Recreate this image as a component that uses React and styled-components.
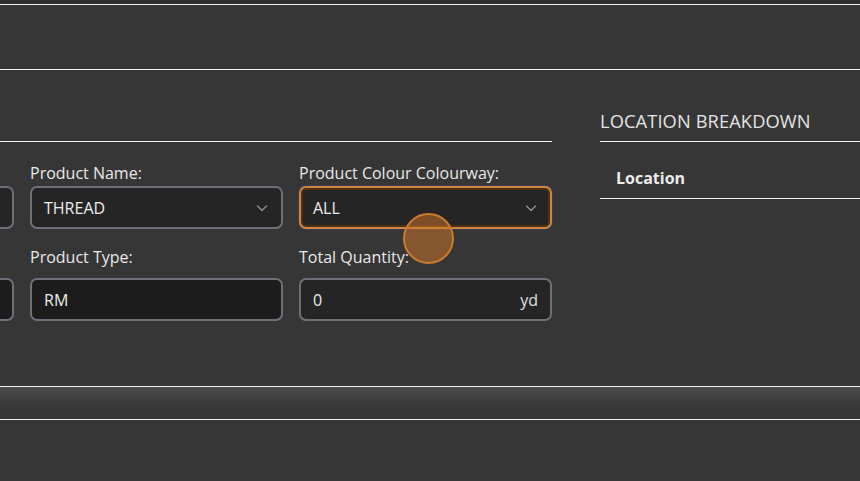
import styled, { createGlobalStyle } from "styled-components";

const GlobalStyle = createGlobalStyle`
  html, body {
    margin: 0;
    padding: 0;
    background: #363636;
    overflow: hidden;
    font-family: "Open Sans", "Noto Sans", sans-serif;
    color: #e6e6e6;
  }
`;

const Screen = styled.div`
  position: relative;
  width: 860px;
  height: 481px;
  overflow: hidden;
  background: #363636;
`;

const TopStrip = styled.div`
  height: 4px;
  background: #2f2f2f;
  border-bottom: 1px solid #f2f2f2;
`;

const Toolbar = styled.div`
  height: 64px;
  border-bottom: 1px solid #f2f2f2;
`;

const Main = styled.main`
  height: 316px;
  display: flex;
  align-items: flex-start;
  border-bottom: 1px solid #f2f2f2;
`;

const FormPanel = styled.section`
  flex: 0 0 791px;
  margin-left: -239px;
`;

const SidePanel = styled.section`
  flex: 0 0 420px;
  margin-left: 48px;
`;

const PanelHeader = styled.h2`
  margin: 0;
  padding: 38px 0 8px;
  height: 25px;
  font-size: 18.3px;
  line-height: 25px;
  font-weight: 400;
  letter-spacing: 0.1px;
  color: #e4e4e4;
  white-space: nowrap;
  border-bottom: 1px solid #f2f2f2;
`;

const FormGrid = styled.div`
  display: grid;
  grid-template-columns: repeat(3, 253px);
  column-gap: 16px;
  row-gap: 16px;
  padding-top: 19px;
`;

const Field = styled.div`
  display: flex;
  flex-direction: column;
`;

const Label = styled.label`
  font-size: 16px;
  line-height: 24px;
  min-height: 24px;
  color: #e8e8e8;
  margin-bottom: ${(p) => p.$gap}px;
`;

const InputBox = styled.div`
  box-sizing: border-box;
  height: 43px;
  display: flex;
  align-items: center;
  justify-content: space-between;
  padding: 0 12px;
  border-radius: 7px;
  border: 2px solid ${(p) => (p.$focused ? "#cf8640" : "#6c7079")};
  background: ${(p) => (p.$dark ? "#1c1c1c" : "#252525")};
  box-shadow: ${(p) =>
    p.$focused
      ? "0 0 0 1px #3b3d52, inset 0 0 0 2px rgba(110, 60, 10, 0.55)"
      : "none"};
  font-size: 16px;
  color: #ececec;
`;

const Value = styled.span`
  line-height: 24px;
`;

const Suffix = styled.span`
  font-size: 16px;
  color: #e0e0e0;
`;

const Chevron = () => (
  <svg width="14" height="14" viewBox="0 0 14 14" fill="none">
    <path
      d="M2.5 5l4.5 4.5L11.5 5"
      stroke="#8d9199"
      strokeWidth="1.4"
      strokeLinecap="round"
      strokeLinejoin="round"
    />
  </svg>
);

const Table = styled.table`
  border-collapse: collapse;
  margin-top: 24px;
  width: 420px;
  table-layout: fixed;
`;

const HeadCell = styled.th`
  text-align: left;
  font-size: 16px;
  line-height: 24px;
  font-weight: 700;
  color: #ececec;
  padding: 0 16px 8px;
  border-bottom: 1px solid #f2f2f2;
  width: ${(p) => p.$w}px;
  white-space: nowrap;
`;

const FooterBand = styled.div`
  height: 32px;
  background: linear-gradient(#4b4b4b, #383838 60%, #363636);
  border-bottom: 1px solid #f2f2f2;
`;

const ClickRing = styled.div`
  position: absolute;
  left: 403px;
  top: 213px;
  width: 51px;
  height: 51px;
  border-radius: 50%;
  box-sizing: border-box;
  border: 2px solid #c97b30;
  background: rgba(214, 120, 40, 0.5);
  pointer-events: none;
`;

// the first column sits off the left edge of the view, so its labels are blank
const fields = [
  { label: "", value: "", gap: 1, select: true },
  { label: "Product Name:", value: "THREAD", gap: 1, select: true },
  { label: "Product Colour Colourway:", value: "ALL", gap: 1, select: true, focused: true },
  { label: "", value: "", gap: 9, dark: true },
  { label: "Product Type:", value: "RM", gap: 9, dark: true },
  { label: "Total Quantity:", value: "0", gap: 9, suffix: "yd" },
];

export default function App() {
  return (
    <>
      <GlobalStyle />
      <Screen>
        <TopStrip />
        <Toolbar />
        <Main>
          <FormPanel>
            <PanelHeader />
            <FormGrid>
              {fields.map((f, i) => (
                <Field key={i}>
                  <Label $gap={f.gap}>{f.label}</Label>
                  <InputBox $focused={f.focused} $dark={f.dark}>
                    <Value>{f.value}</Value>
                    {f.select && <Chevron />}
                    {f.suffix && <Suffix>{f.suffix}</Suffix>}
                  </InputBox>
                </Field>
              ))}
            </FormGrid>
          </FormPanel>
          <SidePanel>
            <PanelHeader>LOCATION BREAKDOWN</PanelHeader>
            <Table>
              <thead>
                <tr>
                  <HeadCell $w={242}>Location</HeadCell>
                  <HeadCell $w={178}>Available</HeadCell>
                </tr>
              </thead>
            </Table>
          </SidePanel>
        </Main>
        <FooterBand />
        <ClickRing />
      </Screen>
    </>
  );
}
